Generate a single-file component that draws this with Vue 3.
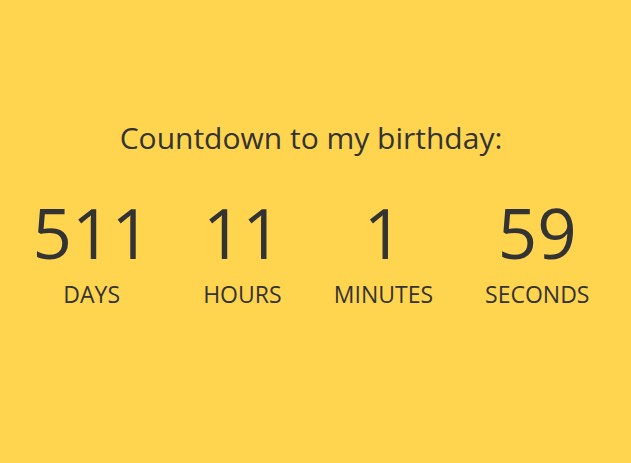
<script setup>
const units = [
  { value: 511, label: 'days' },
  { value: 11, label: 'hours' },
  { value: 1, label: 'minutes' },
  { value: 59, label: 'seconds' },
]
</script>

<template>
  <main class="page">
    <h1 class="title">Countdown to my birthday:</h1>
    <ul class="units">
      <li v-for="unit in units" :key="unit.label" class="unit">
        <span class="value">{{ unit.value }}</span>
        <span class="label">{{ unit.label }}</span>
      </li>
    </ul>
  </main>
</template>

<style>
body {
  margin: 0;
  background: #ffd54f;
}
</style>

<style scoped>
.page {
  display: flex;
  flex-direction: column;
  align-items: center;
  justify-content: center;
  box-sizing: border-box;
  min-height: 100vh;
  padding: 0 9px 16px 0;
  color: #333;
  font-family: "Segoe UI", "Open Sans", "Noto Sans", sans-serif;
  text-align: center;
}

.title {
  margin: 0;
  font-size: 30px;
  font-weight: 400;
  line-height: 48px;
}

.units {
  display: flex;
  margin: 0;
  padding: 0;
  list-style: none;
}

.unit {
  display: flex;
  flex-direction: column;
  padding: 24px 26px;
}

.value {
  font-size: 69px;
  line-height: 92px;
}

.label {
  font-size: 23px;
  line-height: 32px;
  text-transform: uppercase;
}
</style>
